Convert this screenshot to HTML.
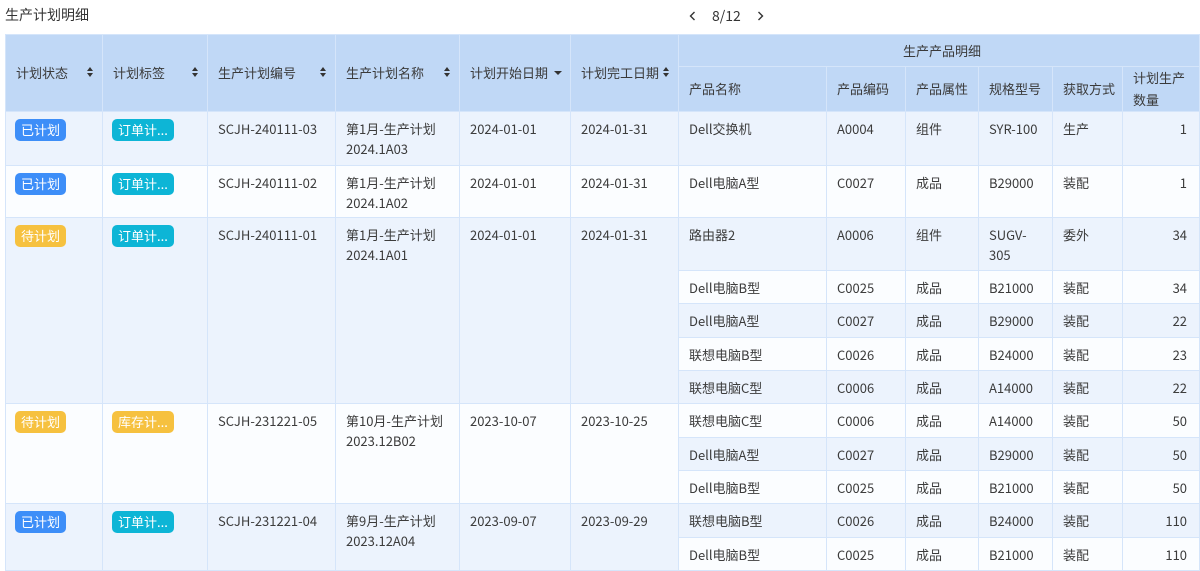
<!DOCTYPE html>
<html><head><meta charset="utf-8"><style>
*{margin:0;padding:0;box-sizing:border-box}
body{width:1200px;height:567px;overflow:hidden;background:#fff;font-family:"Noto Sans CJK SC","Liberation Sans",sans-serif;font-size:13px;color:#3c3c3c;position:relative}
.title{position:absolute;left:5px;top:5px;font-size:14px;color:#333;line-height:20px}
.pager{position:absolute;left:688px;top:4px;font-size:14px;color:#333;line-height:22px}
.pager span{display:inline-block;vertical-align:middle}
table{position:absolute;left:5px;top:34px;width:1194px;border-collapse:collapse;table-layout:fixed}
td,th{border:1px solid #d5e5fa;padding:7px 4px 0 10px;vertical-align:top;line-height:20px;font-weight:normal;text-align:left;overflow:hidden}
th{background:#c0d8f6;color:#3a3a3a;vertical-align:middle;padding-top:0;position:relative;white-space:nowrap}
th.wr{white-space:normal;line-height:22px}
.b{background:#ecf3fd}.w{background:#fbfdff}
.r{text-align:right;padding-right:12px}
.bd{display:inline-block;height:22px;line-height:22px;border-radius:5px;color:#fff;font-size:13px;padding:0 6px;margin-left:-1px;white-space:nowrap}
.bl{background:#3d8ef8}.cy{background:#0db5d6}.ye{background:#f6c13f}
.s{position:absolute;right:8px;top:50%;margin-top:-6px;width:7px;height:12px}
.s:before{content:"";position:absolute;left:0;top:0;border:3.5px solid transparent;border-bottom:4px solid #333;border-top:0}
.s:after{content:"";position:absolute;left:0;top:6px;border:3.5px solid transparent;border-top:4px solid #333;border-bottom:0}
.d{position:absolute;right:8px;top:50%;margin-top:-2px;border:4px solid transparent;border-top:4px solid #333;border-bottom:0}
</style></head><body>
<div class="title">生产计划明细</div>
<div class="pager"><svg width="10" height="12" viewBox="0 0 10 12" style="vertical-align:middle;margin-right:14px"><path d="M6.5 2 L2.5 6 L6.5 10" fill="none" stroke="#333" stroke-width="1.4"/></svg><span>8/12</span><svg width="10" height="12" viewBox="0 0 10 12" style="vertical-align:middle;margin-left:14px"><path d="M3.5 2 L7.5 6 L3.5 10" fill="none" stroke="#333" stroke-width="1.4"/></svg></div>
<table>
<colgroup><col style="width:97px"><col style="width:105px"><col style="width:128px"><col style="width:124px"><col style="width:111px"><col style="width:108px"><col style="width:148px"><col style="width:79px"><col style="width:73px"><col style="width:74px"><col style="width:70px"><col style="width:77px"></colgroup>
<tr style="height:32px"><th rowspan="2">计划状态<i class="s"></i></th><th rowspan="2">计划标签<i class="s"></i></th><th rowspan="2">生产计划编号<i class="s"></i></th><th rowspan="2">生产计划名称<i class="s"></i></th><th rowspan="2">计划开始日期<i class="d"></i></th><th rowspan="2">计划完工日期<i class="s"></i></th><th colspan="6" style="text-align:center">生产产品明细</th></tr>
<tr style="height:44px"><th>产品名称</th><th>产品编码</th><th>产品属性</th><th>规格型号</th><th>获取方式</th><th class="wr">计划生产数量</th></tr>

<tr style="height:54px" class="b"><td><span class="bd bl">已计划</span></td><td><span class="bd cy">订单计...</span></td><td>SCJH-240111-03</td><td>第1月-生产计划2024.1A03</td><td>2024-01-01</td><td>2024-01-31</td><td>Dell交换机</td><td>A0004</td><td>组件</td><td>SYR-100</td><td>生产</td><td class="r">1</td></tr>
<tr style="height:52px" class="w"><td><span class="bd bl">已计划</span></td><td><span class="bd cy">订单计...</span></td><td>SCJH-240111-02</td><td>第1月-生产计划2024.1A02</td><td>2024-01-01</td><td>2024-01-31</td><td>Dell电脑A型</td><td>C0027</td><td>成品</td><td>B29000</td><td>装配</td><td class="r">1</td></tr>
<tr style="height:53px" class="b"><td rowspan="5" class="b"><span class="bd ye">待计划</span></td><td rowspan="5" class="b"><span class="bd cy">订单计...</span></td><td rowspan="5" class="b">SCJH-240111-01</td><td rowspan="5" class="b">第1月-生产计划2024.1A01</td><td rowspan="5" class="b">2024-01-01</td><td rowspan="5" class="b">2024-01-31</td><td>路由器2</td><td>A0006</td><td>组件</td><td>SUGV-<br>305</td><td>委外</td><td class="r">34</td></tr>
<tr style="height:33px" class="w"><td>Dell电脑B型</td><td>C0025</td><td>成品</td><td>B21000</td><td>装配</td><td class="r">34</td></tr>
<tr style="height:34px" class="b"><td>Dell电脑A型</td><td>C0027</td><td>成品</td><td>B29000</td><td>装配</td><td class="r">22</td></tr>
<tr style="height:33px" class="w"><td>联想电脑B型</td><td>C0026</td><td>成品</td><td>B24000</td><td>装配</td><td class="r">23</td></tr>
<tr style="height:33px" class="b"><td>联想电脑C型</td><td>C0006</td><td>成品</td><td>A14000</td><td>装配</td><td class="r">22</td></tr>
<tr style="height:34px" class="w"><td rowspan="3" class="w"><span class="bd ye">待计划</span></td><td rowspan="3" class="w"><span class="bd ye">库存计...</span></td><td rowspan="3" class="w">SCJH-231221-05</td><td rowspan="3" class="w">第10月-生产计划2023.12B02</td><td rowspan="3" class="w">2023-10-07</td><td rowspan="3" class="w">2023-10-25</td><td>联想电脑C型</td><td>C0006</td><td>成品</td><td>A14000</td><td>装配</td><td class="r">50</td></tr>
<tr style="height:33px" class="b"><td>Dell电脑A型</td><td>C0027</td><td>成品</td><td>B29000</td><td>装配</td><td class="r">50</td></tr>
<tr style="height:33px" class="w"><td>Dell电脑B型</td><td>C0025</td><td>成品</td><td>B21000</td><td>装配</td><td class="r">50</td></tr>
<tr style="height:34px" class="b"><td rowspan="2" class="b"><span class="bd bl">已计划</span></td><td rowspan="2" class="b"><span class="bd cy">订单计...</span></td><td rowspan="2" class="b">SCJH-231221-04</td><td rowspan="2" class="b">第9月-生产计划2023.12A04</td><td rowspan="2" class="b">2023-09-07</td><td rowspan="2" class="b">2023-09-29</td><td>联想电脑B型</td><td>C0026</td><td>成品</td><td>B24000</td><td>装配</td><td class="r">110</td></tr>
<tr style="height:33px" class="w"><td>Dell电脑B型</td><td>C0025</td><td>成品</td><td>B21000</td><td>装配</td><td class="r">110</td></tr>
</table>
</body></html>
